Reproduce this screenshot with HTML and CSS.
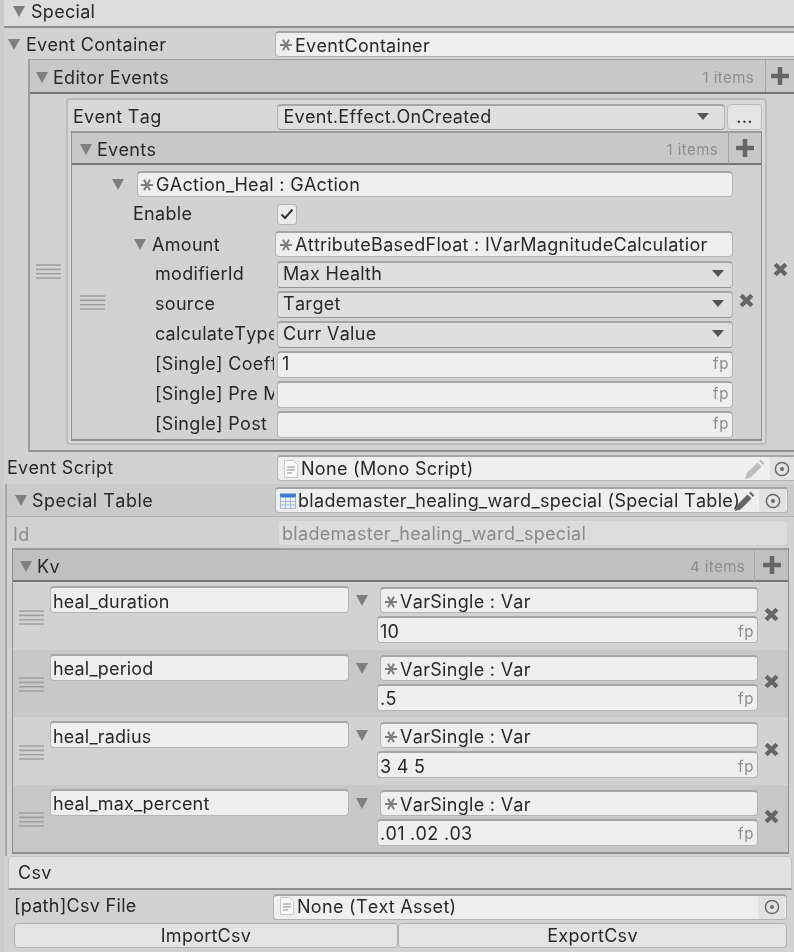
FILE: index.html
```html
<!DOCTYPE html>
<html>
<head>
	<title>Special Inspector</title>
	<meta charset="utf-8">
	<link rel="stylesheet" href="styles.css">
</head>
<body>

<svg class="defs" width="0" height="0">
	<symbol id="star" viewBox="0 0 14 14"><path d="M1 7h12M4 1.800l6 10.400M10 1.800L4 12.200" stroke="#7d7d7d" stroke-width="2" fill="none"/></symbol>
	<symbol id="tri" viewBox="0 0 12 12"><path d="M0 1h12L6 12z" fill="#7f7f7f"/></symbol>
	<symbol id="plus" viewBox="0 0 18 18"><path d="M9 1v16M1 9h16" stroke="#666" stroke-width="4.500" stroke-linecap="round" fill="none"/></symbol>
	<symbol id="cross" viewBox="0 0 14 14"><path d="M2 2l10 10M12 2L2 12" stroke="#666" stroke-width="4" fill="none"/></symbol>
	<symbol id="handle" viewBox="0 0 25 15"><path d="M0 1h25M0 5.400h25M0 9.800h25M0 14h25" stroke="#a0a0a0" stroke-width="1.600" fill="none"/></symbol>
	<symbol id="doc" viewBox="0 0 16 20"><path d="M1.500 1.500h9l4 4v13h-13z" fill="#fbfbfb" stroke="#c8c8c8"/><path d="M4 8h8M4 11h8M4 14h5" stroke="#8a8a8a"/></symbol>
	<symbol id="table" viewBox="0 0 16 16"><path d="M0 .5h16v4H0z" fill="#3f7fd0"/><path d="M.5 5v10.500h15V5M5.500 5v10M10.500 5v10M.5 8.500h15M.5 12h15" stroke="#9db8da" fill="none"/></symbol>
	<symbol id="pencil" viewBox="0 0 20 20"><path d="M0 20l1.500-5.500L12.500 3.500l4 4L5.500 18.500zM14 2l1.500-1.500 4 4L18 6z" fill="currentColor"/></symbol>
	<symbol id="target" viewBox="0 0 16 16"><circle cx="8" cy="8" r="6.600" fill="none" stroke="#6a6a6a" stroke-width="1.500"/><circle cx="8" cy="8" r="2" fill="#6a6a6a"/></symbol>
	<symbol id="check" viewBox="0 0 14 12"><path d="M1.500 6.500l3.500 3.500 7.500-8.500" fill="none" stroke="#333" stroke-width="2"/></symbol>
	<symbol id="drop" viewBox="0 0 12 7"><path d="M0 0h12L6 7z" fill="#555"/></symbol>
</svg>

<div class="page">

	<div class="special-head">
		<svg class="tri"><use href="#tri"/></svg>
		<span>Special</span>
	</div>

	<div class="row container-row">
		<svg class="tri"><use href="#tri"/></svg>
		<span class="container-label">Event Container</span>
		<div class="field field-bleed star-field"><svg class="star"><use href="#star"/></svg>EventContainer</div>
	</div>

	<div class="list editor-list">
		<div class="list-head">
			<svg class="tri"><use href="#tri"/></svg>
			<span class="list-title">Editor Events</span>
			<span class="count">1 items</span>
			<span class="add"><svg class="plus"><use href="#plus"/></svg></span>
		</div>
		<div class="list-body">
			<div class="handle-col editor-handle"><svg class="handle"><use href="#handle"/></svg></div>
			<div class="card">
				<div class="row tag-row">
					<span class="tag-label">Event Tag</span>
					<div class="field dropdown tag-drop">Event.Effect.OnCreated<svg class="drop"><use href="#drop"/></svg></div>
					<div class="dots">...</div>
				</div>
				<div class="list events-list">
					<div class="list-head">
						<svg class="tri"><use href="#tri"/></svg>
						<span class="list-title">Events</span>
						<span class="count">1 items</span>
						<span class="add"><svg class="plus"><use href="#plus"/></svg></span>
					</div>
					<div class="list-body">
						<div class="handle-col events-handle"><svg class="handle"><use href="#handle"/></svg></div>
						<div class="props">
							<div class="prop">
								<svg class="tri"><use href="#tri"/></svg>
								<div class="field gaction"><svg class="star"><use href="#star"/></svg>GAction_Heal : GAction</div>
							</div>
							<div class="prop">
								<span class="label enable-label">Enable</span>
								<div class="checkbox"><svg class="check"><use href="#check"/></svg></div>
							</div>
							<div class="prop">
								<svg class="tri amount-tri"><use href="#tri"/></svg>
								<span class="label amount-label">Amount</span>
								<div class="field grow clipped star-field"><svg class="star"><use href="#star"/></svg>AttributeBasedFloat : IVarMagnitudeCalculatior</div>
							</div>
							<div class="prop">
								<span class="label sub-label">modifierId</span>
								<div class="field dropdown grow">Max Health<svg class="drop"><use href="#drop"/></svg></div>
							</div>
							<div class="prop">
								<span class="label sub-label">source</span>
								<div class="field dropdown grow">Target<svg class="drop"><use href="#drop"/></svg></div>
							</div>
							<div class="prop">
								<span class="label sub-label">calculateType</span>
								<div class="field dropdown grow">Curr Value<svg class="drop"><use href="#drop"/></svg></div>
							</div>
							<div class="prop">
								<span class="label sub-label">[Single] Coefficient</span>
								<div class="field number grow">1<span class="fp">fp</span></div>
							</div>
							<div class="prop">
								<span class="label sub-label">[Single] Pre Multiply</span>
								<div class="field number grow"><span class="fp">fp</span></div>
							</div>
							<div class="prop">
								<span class="label sub-label">[Single] Post Multiply</span>
								<div class="field number grow"><span class="fp">fp</span></div>
							</div>
						</div>
						<div class="remove-col"><svg class="cross"><use href="#cross"/></svg></div>
					</div>
				</div>
			</div>
			<div class="remove-col"><svg class="cross"><use href="#cross"/></svg></div>
		</div>
	</div>

	<div class="row script-row">
		<span class="script-label">Event Script</span>
		<div class="field object script-field">
			<svg class="doc"><use href="#doc"/></svg>None (Mono Script)
			<svg class="pencil pencil-off"><use href="#pencil"/></svg>
			<span class="picker"><svg class="target"><use href="#target"/></svg></span>
		</div>
	</div>

	<div class="table-section">
		<div class="row table-head">
			<svg class="tri"><use href="#tri"/></svg>
			<span class="table-label">Special Table</span>
			<div class="field object table-field">
				<svg class="table-icon"><use href="#table"/></svg>blademaster_healing_ward_special (Special Table)
				<svg class="pencil pencil-over"><use href="#pencil"/></svg>
				<span class="picker"><svg class="target"><use href="#target"/></svg></span>
			</div>
		</div>

		<div class="row id-row">
			<span class="id-label">Id</span>
			<div class="field disabled">blademaster_healing_ward_special</div>
		</div>

		<div class="list kv-list">
			<div class="list-head">
				<svg class="tri"><use href="#tri"/></svg>
				<span class="list-title">Kv</span>
				<span class="count">4 items</span>
				<span class="add"><svg class="plus"><use href="#plus"/></svg></span>
			</div>
			<div class="kv-row">
				<div class="kv-handle"><svg class="handle"><use href="#handle"/></svg></div>
				<div class="field kv-key">heal_duration</div>
				<svg class="tri kv-tri"><use href="#tri"/></svg>
				<div class="kv-val">
					<div class="field kv-obj"><svg class="star"><use href="#star"/></svg>VarSingle : Var</div>
					<div class="field number">10<span class="fp">fp</span></div>
				</div>
				<div class="remove-col"><svg class="cross"><use href="#cross"/></svg></div>
			</div>
			<div class="kv-row kv-alt">
				<div class="kv-handle"><svg class="handle"><use href="#handle"/></svg></div>
				<div class="field kv-key">heal_period</div>
				<svg class="tri kv-tri"><use href="#tri"/></svg>
				<div class="kv-val">
					<div class="field kv-obj"><svg class="star"><use href="#star"/></svg>VarSingle : Var</div>
					<div class="field number">.5<span class="fp">fp</span></div>
				</div>
				<div class="remove-col"><svg class="cross"><use href="#cross"/></svg></div>
			</div>
			<div class="kv-row">
				<div class="kv-handle"><svg class="handle"><use href="#handle"/></svg></div>
				<div class="field kv-key">heal_radius</div>
				<svg class="tri kv-tri"><use href="#tri"/></svg>
				<div class="kv-val">
					<div class="field kv-obj"><svg class="star"><use href="#star"/></svg>VarSingle : Var</div>
					<div class="field number">3 4 5<span class="fp">fp</span></div>
				</div>
				<div class="remove-col"><svg class="cross"><use href="#cross"/></svg></div>
			</div>
			<div class="kv-row kv-alt">
				<div class="kv-handle"><svg class="handle"><use href="#handle"/></svg></div>
				<div class="field kv-key">heal_max_percent</div>
				<svg class="tri kv-tri"><use href="#tri"/></svg>
				<div class="kv-val">
					<div class="field kv-obj"><svg class="star"><use href="#star"/></svg>VarSingle : Var</div>
					<div class="field number">.01 .02 .03<span class="fp">fp</span></div>
				</div>
				<div class="remove-col"><svg class="cross"><use href="#cross"/></svg></div>
			</div>
		</div>
	</div>

	<div class="csv">
		<div class="csv-head">Csv</div>
		<div class="row csv-row">
			<span class="csv-label">[path]Csv File</span>
			<div class="field object csv-field">
				<svg class="doc"><use href="#doc"/></svg>None (Text Asset)
				<span class="picker"><svg class="target"><use href="#target"/></svg></span>
			</div>
		</div>
		<div class="csv-buttons">
			<div class="btn btn-import">ImportCsv</div>
			<div class="btn btn-export">ExportCsv</div>
		</div>
	</div>

</div>

</body>
</html>
```

FILE: styles.css
```css
* {
	box-sizing: border-box;
}
body {
	margin: 0;
	font-family: Inter, "Liberation Sans", sans-serif;
	font-size: 18px;
	font-kerning: none;
	letter-spacing: 0.3px;
	color: #282828;
	background: #cbcbcb;
}
.defs {
	display: block;
}
.page {
	width: 794px;
	height: 952px;
	overflow: hidden;
	background: #d2d2d2;
	border-left: 4px solid #cacaca;
	filter: blur(0.3px);
}
svg {
	flex: none;
}
.row {
	display: flex;
	align-items: center;
}
.tri {
	width: 12px;
	height: 12px;
}
.star {
	width: 14px;
	height: 14px;
	margin-right: 2px;
}

/* headers */
.special-head {
	display: flex;
	align-items: center;
	height: 28px;
	padding: 0 0 4px 9px;
	background: #dcdcdc;
	border-bottom: 2px solid #8f8f8f;
}
.special-head span {
	margin-left: 6px;
}
.container-row {
	height: 31px;
	padding-left: 4px;
}
.container-label {
	width: 249px;
	margin-top: 2px;
	margin-left: 6px;
	white-space: nowrap;
}

/* fields */
.field {
	display: flex;
	align-items: center;
	height: 26px;
	padding-left: 5px;
	background: #efefef;
	border: 1px solid #b4b4b4;
	border-top: 2px solid #a6a6a6;
	border-radius: 4px;
	white-space: nowrap;
	overflow: hidden;
}
.star-field {
	padding-left: 3px;
}
.field-bleed {
	flex: 1;
	margin-right: -4px;
	padding-top: 2px;
	border-right: 0;
	border-radius: 4px 0 0 4px;
}
.grow {
	flex: 1;
	min-width: 0;
}
.clipped {
	padding-right: 25px;
}
.dropdown {
	justify-content: space-between;
	height: 27px;
	padding-right: 8px;
	padding-bottom: 2px;
	background: #dfdfdf;
	border-bottom-color: #959595;
}
.drop {
	width: 12px;
	height: 7px;
}
.number {
	justify-content: flex-start;
	height: 27px;
	padding-right: 3px;
	padding-left: 4px;
	padding-bottom: 2px;
}
.fp {
	margin-left: auto;
	font-size: 15px;
	letter-spacing: 0.6px;
	color: #8c8c8c;
}
.object {
	padding-left: 3px;
	padding-right: 1px;
}
.doc {
	width: 16px;
	height: 20px;
	margin: 0 2px;
}
.table-icon {
	width: 16px;
	height: 16px;
	margin: 0 2px 0 1px;
}
.pencil {
	width: 20px;
	height: 20px;
	margin-left: auto;
	margin-right: 5px;
	color: #656565;
}
.pencil-off {
	color: #bdbdbd;
}
.pencil-over {
	margin-left: -5px;
	margin-right: 4px;
}
.picker {
	display: flex;
	align-items: center;
	justify-content: center;
	flex: none;
	width: 27px;
	height: 100%;
	margin-left: auto;
	background: #e2e2e2;
}
.pencil + .picker {
	margin-left: 0;
}
.target {
	width: 16px;
	height: 16px;
}

/* lists */
.list {
	background: #d2d2d2;
}
.list-head {
	display: flex;
	align-items: center;
	flex: none;
	height: 34px;
	padding-top: 2px;
	padding-left: 7px;
	background: #c8c8c8;
	border-top: 2px solid #9c9c9c;
	border-bottom: 2px solid #757575;
}
.list-title {
	margin-left: 5px;
}
.count {
	margin-left: auto;
	margin-right: 11px;
	font-size: 15px;
	letter-spacing: 0.4px;
	color: #8e8e8e;
}
.add {
	display: flex;
	align-items: center;
	justify-content: center;
	flex: none;
	width: 29px;
	height: 32px;
	margin-top: -2px;
	border-left: 1px solid #a8a8a8;
}
.plus {
	width: 18px;
	height: 18px;
}
.list-body {
	display: flex;
}
.handle-col {
	display: flex;
	align-items: center;
	justify-content: center;
	flex: none;
}
.handle {
	width: 25px;
	height: 15px;
}
.remove-col {
	display: flex;
	align-items: center;
	justify-content: center;
	flex: none;
}
.cross {
	width: 15px;
	height: 15px;
}

/* editor events */
.editor-list {
	margin-left: 24px;
	height: 393px;
	border-left: 2px solid #9e9e9e;
	border-bottom: 2px solid #8f8f8f;
}
.editor-list > .list-head {
	height: 35px;
	padding-left: 6px;
	border-top-width: 1px;
}
.editor-list > .list-body {
	padding-top: 4px;
}
.editor-handle {
	width: 36px;
}
.editor-list > .list-body > .remove-col {
	width: 27px;
	margin-bottom: 4px;
}
.card {
	flex: none;
	width: 701px;
	height: 347px;
	padding: 0 3px;
	background: #d8d8d8;
	border: 2px solid #bcbcbc;
	border-radius: 4px;
}
.tag-row {
	height: 31px;
	padding-top: 2px;
	padding-left: 2px;
}
.tag-label {
	width: 205px;
}
.tag-drop {
	width: 449px;
	height: 26px;
	padding-right: 15px;
}
.dots {
	display: flex;
	align-items: center;
	justify-content: center;
	width: 35px;
	height: 26px;
	margin-left: 2px;
	background: #e4e4e4;
	border: 1px solid #bcbcbc;
	border-radius: 4px;
}
.events-list {
	width: 691px;
	height: 310px;
	border-left: 1px solid #8f8f8f;
	border-right: 1px solid #8f8f8f;
	border-bottom: 2px solid #8f8f8f;
}
.events-list .list-head {
	padding-left: 8px;
}
.events-list .add {
	width: 33px;
}
.events-list .count {
	margin-right: 10px;
}
.events-handle {
	width: 40px;
}
.props {
	display: flex;
	flex-direction: column;
	flex: none;
	width: 621px;
	padding-top: 4px;
}
.events-list .remove-col {
	flex: 1;
	margin-bottom: 3px;
	margin-right: 1px;
}
.prop {
	display: flex;
	align-items: center;
	flex: none;
	height: 30px;
}
.label {
	flex: none;
	overflow: hidden;
	white-space: nowrap;
}
.gaction {
	flex: 1;
	margin-left: 13px;
	padding-left: 2px;
}
.enable-label {
	width: 144px;
	margin-left: 21px;
	margin-bottom: 2px;
}
.checkbox {
	display: flex;
	align-items: center;
	justify-content: center;
	width: 20px;
	height: 21px;
	background: #ececec;
	border: 1px solid #b4b4b4;
	border-radius: 3px;
}
.check {
	width: 14px;
	height: 12px;
}
.amount-tri {
	margin-left: 22px;
}
.amount-label {
	width: 123px;
	margin-left: 6px;
}
.sub-label {
	width: 119px;
	margin-bottom: 2px;
	margin-left: 43px;
	margin-right: 3px;
}

/* script */
.script-row {
	height: 32px;
	padding-left: 3px;
	background: #d2d2d2;
}
.script-label {
	width: 270px;
	margin-bottom: 2px;
}
.script-field {
	flex: 1;
	margin-right: -1px;
	border-right: 0;
	border-radius: 4px 0 0 4px;
}
.script-field .picker {
	width: 24px;
}

/* special table */
.table-section {
	height: 372px;
	margin-left: 1px;
	border-left: 2px solid #a8a8a8;
}
.table-head {
	height: 33px;
	padding-left: 8px;
	background: #cacaca;
	border-bottom: 1px solid #b0b0b0;
}
.table-label {
	width: 243px;
	margin-left: 5px;
	letter-spacing: 0.5px;
}
.table-field {
	flex: none;
	width: 513px;
}
.id-row {
	height: 31px;
	padding-left: 6px;
}
.id-label {
	width: 265px;
	margin-top: 4px;
	color: #8c8c8c;
}
.disabled {
	width: 510px;
	height: 26px;
	padding-top: 2px;
	padding-left: 3px;
	color: #8a8a8a;
	background: #dcdcdc;
	border: 1px solid #d0d0d0;
}
.kv-list {
	width: 777px;
	margin-left: 5px;
	border-left: 1px solid #8f8f8f;
	border-right: 1px solid #8f8f8f;
	border-bottom: 2px solid #8f8f8f;
}
.kv-list .list-head {
	background: #c0c0c0;
}
.kv-list .count {
	margin-right: 9px;
}
.kv-list .add {
	width: 34px;
}
.kv-row {
	display: flex;
	height: 67.5px;
	background: #d2d2d2;
}
.kv-alt {
	background: #c8c8c8;
}
.kv-handle {
	display: flex;
	align-items: center;
	justify-content: center;
	flex: none;
	width: 37px;
	height: 100%;
	padding-top: 3px;
}
.kv-key {
	flex: none;
	width: 299px;
	height: 27px;
	margin-top: 4px;
	padding-top: 2px;
	padding-left: 2px;
	letter-spacing: 0.2px;
}
.kv-tri {
	margin: 12px 12px 0 7px;
}
.kv-val {
	display: flex;
	flex-direction: column;
	gap: 3px;
	flex: none;
	width: 381px;
	padding-top: 5px;
	margin-left: -3px;
}
.kv-val .field {
	padding-top: 2px;
}
.kv-val .number {
	padding-bottom: 0;
	padding-left: 2px;
}
.kv-obj {
	margin-left: 3px;
	padding-left: 3px;
}
.kv-row .remove-col {
	flex: 1;
	margin-right: 3px;
	padding-bottom: 3px;
}

/* csv */
.csv {
	margin-left: 4px;
	margin-right: 2px;
}
.csv-head {
	display: flex;
	align-items: center;
	height: 34px;
	padding-left: 9px;
	background: #e2e2e2;
	border: 1px solid #c6c6c6;
	border-bottom: 2px solid #8f8f8f;
	border-radius: 4px 4px 0 0;
}
.csv-row {
	height: 33px;
	padding-left: 6px;
}
.csv-label {
	width: 259px;
	margin-bottom: 2px;
}
.csv-field {
	flex: none;
	width: 514px;
	height: 26px;
	padding-bottom: 2px;
}
.csv-field .picker {
	height: 26px;
	margin-bottom: -2px;
}
.csv-buttons {
	display: flex;
	margin-left: 6px;
	width: 773px;
}
.btn {
	display: flex;
	align-items: center;
	justify-content: center;
	height: 25px;
	background: #e4e4e4;
	border: 1px solid #b0b0b0;
	border-radius: 4px;
}
.btn-import {
	flex: none;
	width: 384px;
}
.btn-export {
	flex: 1;
}
```
